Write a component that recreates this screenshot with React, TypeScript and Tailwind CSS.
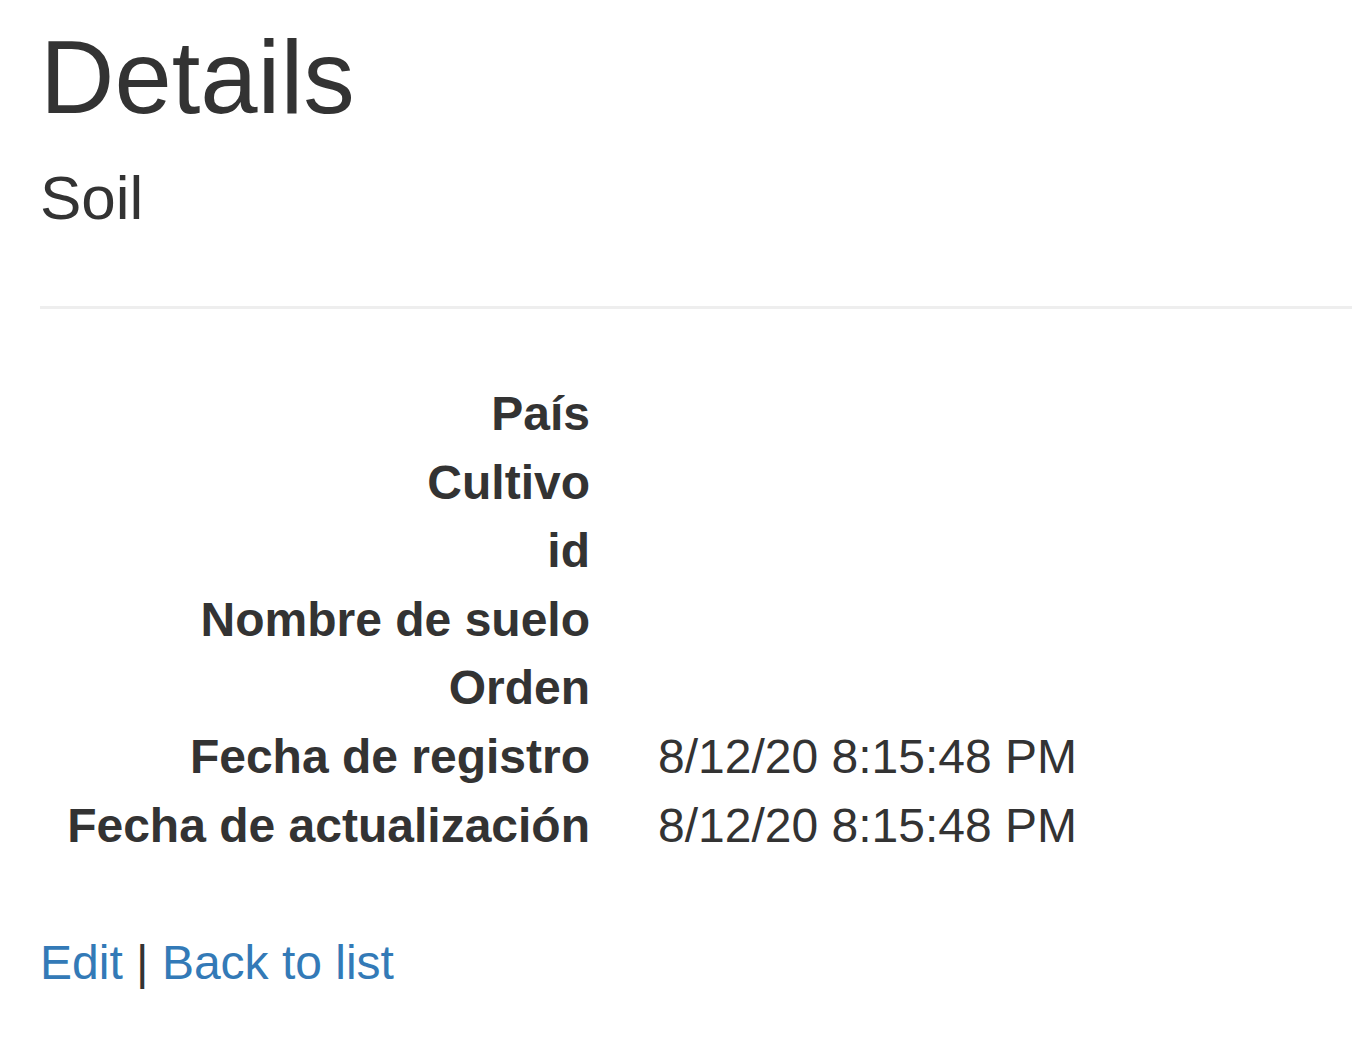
export default function App() {
  const rows: [string, string][] = [
    ["País", ""],
    ["Cultivo", ""],
    ["id", ""],
    ["Nombre de suelo", ""],
    ["Orden", ""],
    ["Fecha de registro", "8/12/20 8:15:48 PM"],
    ["Fecha de actualización", "8/12/20 8:15:48 PM"],
  ]

  return (
    <div className="min-h-[1055px] bg-white pl-[40px] font-['Liberation_Sans',Arial,sans-serif] text-[#333]">
      <h2 className="pt-[21px] text-[103px] leading-[113px] font-normal">Details</h2>
      <h4 className="mt-[30px] text-[62px] leading-[68px] font-normal">Soil</h4>
      <hr className="mt-[74px] border-0 border-t-[3px] border-[#eee]" />
      <dl className="mt-[71px] grid grid-cols-[550px_1fr] gap-x-[68px] text-[48px] leading-[68.6px]">
        {rows.map(([label, value]) => (
          <div key={label} className="contents">
            <dt className="text-right font-bold whitespace-nowrap">{label}</dt>
            <dd>{value}</dd>
          </div>
        ))}
      </dl>
      <p className="mt-[69px] text-[48px] leading-[68.6px]">
        <a href="#" className="text-[#337ab7]">Edit</a> |{" "}
        <a href="#" className="text-[#337ab7]">Back to list</a>
      </p>
    </div>
  )
}
